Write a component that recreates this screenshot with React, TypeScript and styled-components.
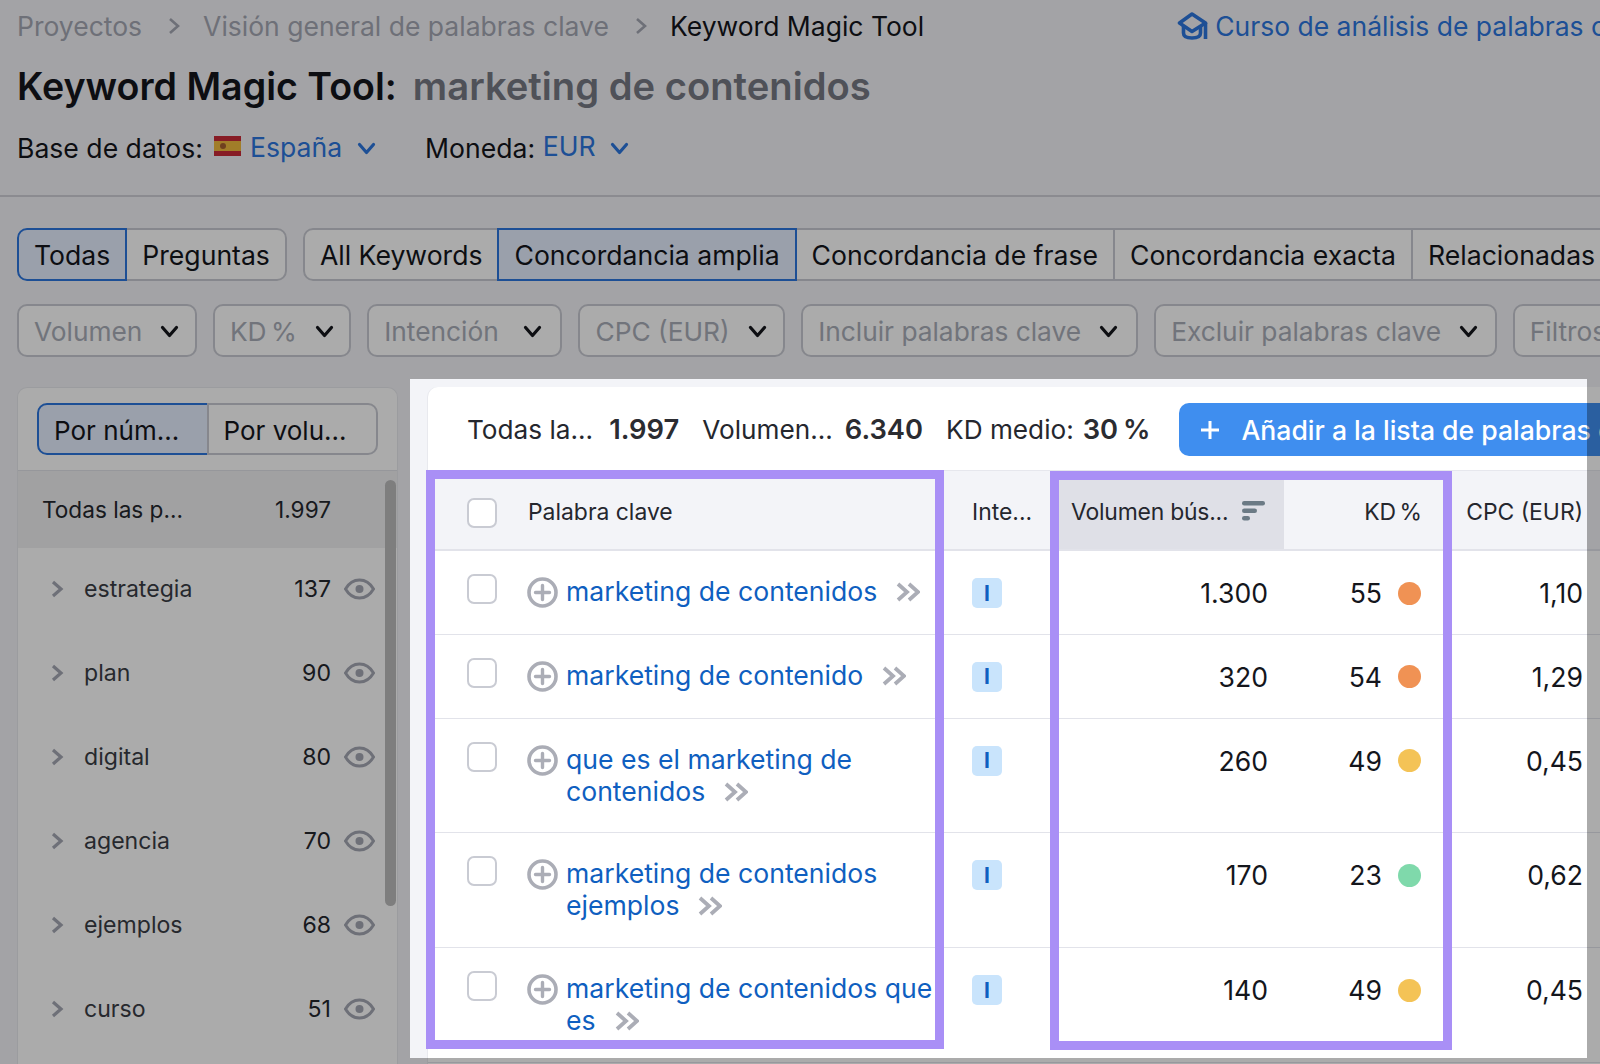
import React from "react";
import styled, { createGlobalStyle } from "styled-components";

const GlobalStyle = createGlobalStyle`
  html, body {
    margin: 0;
    padding: 0;
    background: #f4f4f8;
  }
  * {
    box-sizing: border-box;
  }
`;

const Page = styled.div`
  position: relative;
  width: 1600px;
  height: 1064px;
  overflow: hidden;
  background: #f4f4f8;
  font-family: Inter, "Liberation Sans", sans-serif;
  font-size: 26.6px;
  color: #14161c;
`;

/* everything outside this window is dimmed */
const Spotlight = styled.div`
  position: absolute;
  left: 410px;
  top: 379px;
  width: 1177px;
  height: 679px;
  box-shadow: 0 0 0 2000px rgba(0, 0, 0, 0.33);
  pointer-events: none;
  z-index: 5;
`;

const Header = styled.header`
  padding-left: 17px;
  border-bottom: 2px solid #cfd0d7;
  height: 197px;
`;

const Breadcrumbs = styled.nav`
  display: flex;
  align-items: center;
  height: 51px;
  font-size: 26.5px;
  white-space: nowrap;
`;

const Crumb = styled.span<{ $current?: boolean }>`
  flex: none;
  color: ${(p) => (p.$current ? "#14161c" : "#a4a7b3")};
`;

const CrumbArrow = styled.svg`
  flex: none;
  width: 14px;
  height: 20px;
  margin: 0 22px 0 25px;
`;

const CourseLink = styled.a`
  flex: none;
  display: flex;
  align-items: center;
  gap: 7px;
  margin-left: 253px;
  color: #2c76df;
`;

const Title = styled.h1`
  display: flex;
  gap: 16px;
  align-items: center;
  height: 70px;
  margin: 0;
  font-size: 37.6px;
  font-weight: 600;
  white-space: nowrap;
`;

const Query = styled.span`
  font-size: 38.2px;
  color: #767983;
`;

const Meta = styled.div`
  display: flex;
  align-items: center;
  height: 54px;
`;

const MetaValue = styled.span<{ $raised?: boolean }>`
  color: #2c76df;
  position: relative;
  top: ${(p) => (p.$raised ? "-2px" : "-1px")};
`;

const ChevronIcon = styled.svg<{ $after?: number; $before?: number }>`
  flex: none;
  width: 19px;
  height: 13px;
  margin-left: ${(p) => p.$before ?? 0}px;
  margin-right: ${(p) => p.$after ?? 0}px;
`;

const Flag = styled.svg`
  flex: none;
  width: 27px;
  height: 20px;
  margin: -4px 9px 0 11px;
`;

const Tabs = styled.div`
  display: flex;
  gap: 16px;
  margin: 31px 0 23px 17px;
  height: 53px;
`;

const TabGroup = styled.div`
  flex: none;
  display: flex;
  background: #fff;
  border-radius: 10px;
`;

const Tab = styled.div<{ $active?: boolean }>`
  display: flex;
  align-items: center;
  padding: 0 15px;
  white-space: nowrap;
  border: 2px solid ${(p) => (p.$active ? "#2c76df" : "#c8cad2")};
  background: ${(p) => (p.$active ? "#e6efff" : "#fff")};
  margin-left: -2px;
  position: relative;
  z-index: ${(p) => (p.$active ? 1 : 0)};
  &:first-child {
    margin-left: 0;
    border-radius: 10px 0 0 10px;
  }
  &:last-child {
    border-radius: 0 10px 10px 0;
  }
`;

const Filters = styled.div`
  display: flex;
  gap: 16.3px;
  margin-left: 17px;
  height: 53px;
`;

const Filter = styled.div<{ $tight?: boolean; $width?: number }>`
  flex: none;
  display: flex;
  align-items: center;
  justify-content: space-between;
  gap: 18px;
  width: ${(p) => (p.$width ? `${p.$width}px` : "auto")};
  padding: 1px 18px 0 15px;
  font-size: 26.3px;
  background: #fff;
  border: 2px solid #c8cad2;
  border-radius: 10px;
  color: #a9adb8;
  white-space: nowrap;
  word-spacing: ${(p) => (p.$tight ? "-3px" : "0")};
`;

const Body = styled.div`
  display: flex;
  margin-top: 22px;
`;

const Sidebar = styled.aside`
  position: relative;
  flex: none;
  width: 381px;
  height: 677px;
  margin: 8px 12px 0 17px;
  background: #fff;
  border-radius: 10px 10px 0 0;
  border: 1px solid #e8e9ee;
  border-bottom: 0;
`;

const SidebarToggle = styled.div`
  display: flex;
  height: 83px;
  padding: 15px 19px;
  border-bottom: 1px solid #e0e1e8;
`;

const ToggleOption = styled.div<{ $active?: boolean }>`
  flex: 1;
  display: flex;
  align-items: center;
  padding: 3px 0 0 15px;
  font-size: 26px;
  white-space: nowrap;
  border: 2px solid ${(p) => (p.$active ? "#2c76df" : "#c8cad2")};
  background: ${(p) => (p.$active ? "#e6efff" : "#fff")};
  border-radius: ${(p) => (p.$active ? "10px 0 0 10px" : "0 10px 10px 0")};
  margin-left: ${(p) => (p.$active ? "0" : "-2px")};
`;

const AllRow = styled.div`
  display: flex;
  align-items: center;
  justify-content: space-between;
  height: 77px;
  padding: 0 66px 1px 24px;
  background: #f0f0f2;
  font-size: 22.6px;
  color: #25272e;
`;

const GroupRow = styled.div`
  display: flex;
  align-items: center;
  height: 84px;
  padding: 0 0 2px 33px;
  font-size: 23.1px;
  color: #3a3d45;
`;

const GroupArrow = styled.svg`
  width: 13px;
  height: 20px;
  flex: none;
`;

const GroupName = styled.span`
  flex: 1;
  margin-left: 20px;
`;

const GroupCount = styled.span`
  color: #25272e;
`;

const Eye = styled.svg`
  width: 31px;
  height: 22px;
  margin-left: 13px;
  margin-right: 22px;
  flex: none;
`;

const Scrollbar = styled.div`
  position: absolute;
  left: 367px;
  top: 92px;
  width: 11px;
  height: 426px;
  border-radius: 6px;
  background: #bcbcbd;
`;

const Panel = styled.main`
  flex: none;
  width: 1190px;
  height: 685px;
  padding: 8px 0 0 18px;
  background: #f3f4f8;
  overflow: hidden;
`;

const Card = styled.section`
  width: 1172px;
  height: 677px;
  background: #fff;
  border-radius: 10px 0 0 0;
  box-shadow: -1px 0 0 #e8e9ee;
`;

const Stats = styled.div`
  display: flex;
  align-items: center;
  height: 83px;
  padding: 2px 0 0 39px;
  font-size: 26.2px;
  white-space: nowrap;
`;

const Stat = styled.span`
  flex: none;
  color: #25272e;
  margin-right: 23px;
`;

const StatValue = styled.b<{ $gap: number; $tight?: boolean }>`
  margin-left: ${(p) => p.$gap}px;
  font-size: 27.3px;
  font-weight: 600;
  color: #2b2c31;
  word-spacing: ${(p) => (p.$tight ? "-2px" : "0")};
`;

const AddButton = styled.div`
  display: flex;
  align-items: center;
  gap: 21px;
  flex: none;
  height: 53px;
  margin-left: 6px;
  padding: 0 21px;
  background: #3f8eef;
  border-radius: 10px;
  color: #fff;
  font-size: 26.6px;
  font-weight: 500;
`;

const PlusMark = styled.svg`
  width: 20px;
  height: 20px;
  flex: none;
`;

const Table = styled.div`
  position: relative;
`;

const Highlight = styled.div<{ $left: number; $width: number; $top: number }>`
  position: absolute;
  left: ${(p) => p.$left}px;
  top: ${(p) => p.$top}px;
  width: ${(p) => p.$width}px;
  height: 579px;
  border: 9px solid #a98ff6;
  pointer-events: none;
  z-index: 2;
`;

const columns = "516px 106px 234px 166px 150px";

const HeadRow = styled.div`
  display: grid;
  grid-template-columns: ${columns};
  height: 81px;
  background: #f3f4f8;
  border-top: 1px solid #e6e7ed;
  border-bottom: 2px solid #e2e3ea;
  font-size: 22.9px;
  color: #25272e;
`;

const HeadCell = styled.div<{ $align?: string; $sorted?: boolean; $pad?: string }>`
  display: flex;
  align-items: center;
  padding: ${(p) => p.$pad ?? "3px 0 0 0"};
  justify-content: ${(p) => p.$align ?? "flex-start"};
  background: ${(p) => (p.$sorted ? "#dfe0e7" : "transparent")};
  letter-spacing: ${(p) => (p.$sorted ? "-0.2px" : "0")};
  white-space: nowrap;
`;

const HeadKeyword = styled(HeadCell)`
  padding-left: 39px;
  gap: 31px;
`;

const HeadCheck = styled.div`
  width: 30px;
  height: 30px;
  background: #fff;
  border: 2px solid #c9cbd3;
  border-radius: 7px;
  margin-top: 3px;
`;

const KdLabel = styled.span`
  word-spacing: -3px;
`;

const SortIcon = styled.svg`
  width: 24px;
  height: 20px;
  margin-left: 14px;
  margin-top: -2px;
`;

const Row = styled.div`
  display: grid;
  grid-template-columns: ${columns};
  padding: 25px 0 25.8px;
  border-bottom: 1px solid #e2e3ea;
  align-items: start;
`;

const KeywordCell = styled.div`
  display: flex;
  align-items: flex-start;
  padding-left: 39px;
`;

const Check = styled.div`
  flex: none;
  width: 30px;
  height: 30px;
  margin-top: -2px;
  border: 2px solid #c9cbd3;
  border-radius: 7px;
`;

const AddIcon = styled.svg`
  flex: none;
  width: 31px;
  height: 31px;
  margin: 1px 8px 0 30px;
`;

const KeywordLink = styled.a`
  display: block;
  width: 376px;
  margin-top: -1px;
  line-height: 32px;
  color: #0f5fc0;
`;

const Forward = styled.svg`
  width: 24px;
  height: 20px;
  margin-left: 19px;
  vertical-align: -1px;
`;

const IntentCell = styled.div`
  padding-left: 28px;
`;

const IntentBadge = styled.div`
  width: 30px;
  height: 30px;
  margin-top: 2px;
  display: flex;
  align-items: center;
  justify-content: center;
  background: #c9e4fc;
  border-radius: 5px;
  color: #0f5fc0;
  font-size: 21px;
  font-weight: 700;
`;

const NumberCell = styled.div<{ $pad: number }>`
  display: flex;
  justify-content: flex-end;
  align-items: center;
  gap: 16px;
  margin: 1px 0 -1px;
  line-height: 32px;
  padding-right: ${(p) => p.$pad}px;
`;

const Dot = styled.span<{ $color: string }>`
  width: 23px;
  height: 23px;
  border-radius: 50%;
  background: ${(p) => p.$color};
`;

const ORANGE = "#f09254";
const YELLOW = "#f4c356";
const GREEN = "#7fd9ab";

const rows = [
  { keyword: "marketing de contenidos", volume: "1.300", kd: 55, dot: ORANGE, cpc: "1,10" },
  { keyword: "marketing de contenido", volume: "320", kd: 54, dot: ORANGE, cpc: "1,29" },
  { keyword: "que es el marketing de contenidos", volume: "260", kd: 49, dot: YELLOW, cpc: "0,45" },
  { keyword: "marketing de contenidos ejemplos", volume: "170", kd: 23, dot: GREEN, cpc: "0,62" },
  { keyword: "marketing de contenidos que es", volume: "140", kd: 49, dot: YELLOW, cpc: "0,45" },
];

const groups = [
  { name: "estrategia", count: 137 },
  { name: "plan", count: 90 },
  { name: "digital", count: 80 },
  { name: "agencia", count: 70 },
  { name: "ejemplos", count: 68 },
  { name: "curso", count: 51 },
];

const matchTabs = [
  "All Keywords",
  "Concordancia amplia",
  "Concordancia de frase",
  "Concordancia exacta",
  "Relacionadas",
];

const filters = [
  { label: "Volumen", width: 179.6 },
  { label: "KD %", width: 138, tight: true },
  { label: "Intención", width: 195 },
  { label: "CPC (EUR)", width: 206.4 },
  { label: "Incluir palabras clave", width: 336.7 },
  { label: "Excluir palabras clave", width: 342.4 },
  { label: "Filtros avanzados" },
];

const Arrow = () => (
  <CrumbArrow viewBox="0 0 14 20" fill="none" stroke="#a4a7b3" strokeWidth="2.6">
    <path d="M3 3l8 7-8 7" />
  </CrumbArrow>
);

const Chevron = ({ color, before, after }: { color: string; before?: number; after?: number }) => (
  <ChevronIcon
    viewBox="0 0 19 13"
    fill="none"
    stroke={color}
    strokeWidth="3.2"
    strokeLinecap="round"
    strokeLinejoin="round"
    $before={before}
    $after={after}
  >
    <path d="M2.5 2.5l7 8 7-8" />
  </ChevronIcon>
);

const App: React.FC = () => {
  return (
    <Page>
      <GlobalStyle />
      <Header>
        <Breadcrumbs>
          <Crumb>Proyectos</Crumb>
          <Arrow />
          <Crumb>Visión general de palabras clave</Crumb>
          <Arrow />
          <Crumb $current>Keyword Magic Tool</Crumb>
          <CourseLink>
            <svg width="31" height="28" viewBox="0 0 31 28" fill="none" stroke="#2c76df" strokeWidth="3.6" strokeLinejoin="round">
              <path d="M15 2L2.5 11 15 19.5 28.5 11z" />
              <path d="M6.5 14v7c0 3.5 4 5 8.5 5s8.5-1.5 8.5-5v-7M28.500 11v16" />
            </svg>
            Curso de análisis de palabras clave
          </CourseLink>
        </Breadcrumbs>
        <Title>
          Keyword Magic Tool:
          <Query>marketing de contenidos</Query>
        </Title>
        <Meta>
          Base de datos:
          <Flag viewBox="0 0 27 20">
            <rect width="27" height="20" fill="#c92b38" />
            <rect y="5" width="27" height="10" fill="#f0bb3e" />
            <circle cx="9" cy="10" r="3" fill="#a6602f" />
          </Flag>
          <MetaValue>España</MetaValue>
          <Chevron color="#2c76df" before={15} after={49} />
          Moneda:&nbsp;
          <MetaValue $raised>EUR</MetaValue>
          <Chevron color="#2c76df" before={14} />
        </Meta>
      </Header>

      <Tabs>
        <TabGroup>
          <Tab $active>Todas</Tab>
          <Tab>Preguntas</Tab>
        </TabGroup>
        <TabGroup>
          {matchTabs.map((tab) => (
            <Tab key={tab} $active={tab === "Concordancia amplia"}>
              {tab}
            </Tab>
          ))}
        </TabGroup>
      </Tabs>

      <Filters>
        {filters.map((filter) => (
          <Filter key={filter.label} $tight={filter.tight} $width={filter.width}>
            {filter.label}
            <Chevron color="#14161c" />
          </Filter>
        ))}
      </Filters>

      <Body>
        <Sidebar>
          <SidebarToggle>
            <ToggleOption $active>Por núm...</ToggleOption>
            <ToggleOption>Por volu...</ToggleOption>
          </SidebarToggle>
          <AllRow>
            <span>Todas las p...</span>
            <span>1.997</span>
          </AllRow>
          {groups.map((group) => (
            <GroupRow key={group.name}>
              <GroupArrow viewBox="0 0 13 20" fill="none" stroke="#a4a7b3" strokeWidth="3.2">
                <path d="M2 3l8 7-8 7" />
              </GroupArrow>
              <GroupName>{group.name}</GroupName>
              <GroupCount>{group.count}</GroupCount>
              <Eye viewBox="0 0 31 22" fill="none" stroke="#a4a7b3" strokeWidth="3">
                <path d="M1.5 11C5 5 10 2 15.5 2s10.5 3 14 9c-3.5 6-8.5 9-14 9S5 17 1.5 11z" />
                <circle cx="15.5" cy="11" r="4" fill="#a4a7b3" stroke="none" />
              </Eye>
            </GroupRow>
          ))}
          <Scrollbar />
        </Sidebar>

        <Panel>
          <Card>
            <Stats>
              <Stat>
                Todas la...<StatValue $gap={16}>1.997</StatValue>
              </Stat>
              <Stat>
                Volumen...<StatValue $gap={12}>6.340</StatValue>
              </Stat>
              <Stat>
                KD medio:<StatValue $gap={9} $tight>30 %</StatValue>
              </Stat>
              <AddButton>
                <PlusMark viewBox="0 0 20 20" stroke="#fff" strokeWidth="3">
                  <path d="M10 1v18M1 10h18" />
                </PlusMark>
                Añadir a la lista de palabras clave
              </AddButton>
            </Stats>
            <Table>
              <Highlight $left={-2} $top={0} $width={518} />
              <Highlight $left={622} $top={1} $width={402} />
              <HeadRow>
                <HeadKeyword>
                  <HeadCheck />
                  Palabra clave
                </HeadKeyword>
                <HeadCell $pad="3px 0 0 28px">Inte...</HeadCell>
                <HeadCell $sorted $pad="3px 0 0 21px">
                  Volumen bús...
                  <SortIcon viewBox="0 0 24 20" fill="#6b7a85">
                    <rect width="23" height="4.5" rx="2.2" />
                    <rect y="7.5" width="15" height="4.5" rx="2.2" />
                    <rect y="15" width="8" height="4.5" rx="2.2" />
                  </SortIcon>
                </HeadCell>
                <HeadCell $align="flex-end" $pad="3px 28px 0 0">
                  <KdLabel>KD %</KdLabel>
                </HeadCell>
                <HeadCell $align="flex-end" $pad="3px 17px 0 0">CPC (EUR)</HeadCell>
              </HeadRow>
              {rows.map((row) => (
                <Row key={row.keyword}>
                  <KeywordCell>
                    <Check />
                    <AddIcon viewBox="0 0 31 31" fill="none" stroke="#abadb6">
                      <circle cx="15.5" cy="15.5" r="13.5" strokeWidth="3.6" />
                      <path d="M15.5 8.5v14M8.5 15.5h14" strokeWidth="3.4" strokeLinecap="round" />
                    </AddIcon>
                    <KeywordLink>
                      {row.keyword}
                      <Forward viewBox="0 0 24 20" fill="none" stroke="#abadb6" strokeWidth="3.8">
                        <path d="M2 2l9 8-9 8M13 2l9 8-9 8" />
                      </Forward>
                    </KeywordLink>
                  </KeywordCell>
                  <IntentCell>
                    <IntentBadge>I</IntentBadge>
                  </IntentCell>
                  <NumberCell $pad={16}>{row.volume}</NumberCell>
                  <NumberCell $pad={29}>
                    {row.kd}
                    <Dot $color={row.dot} />
                  </NumberCell>
                  <NumberCell $pad={17}>{row.cpc}</NumberCell>
                </Row>
              ))}
            </Table>
          </Card>
        </Panel>
      </Body>
      <Spotlight />
    </Page>
  );
};

export default App;
